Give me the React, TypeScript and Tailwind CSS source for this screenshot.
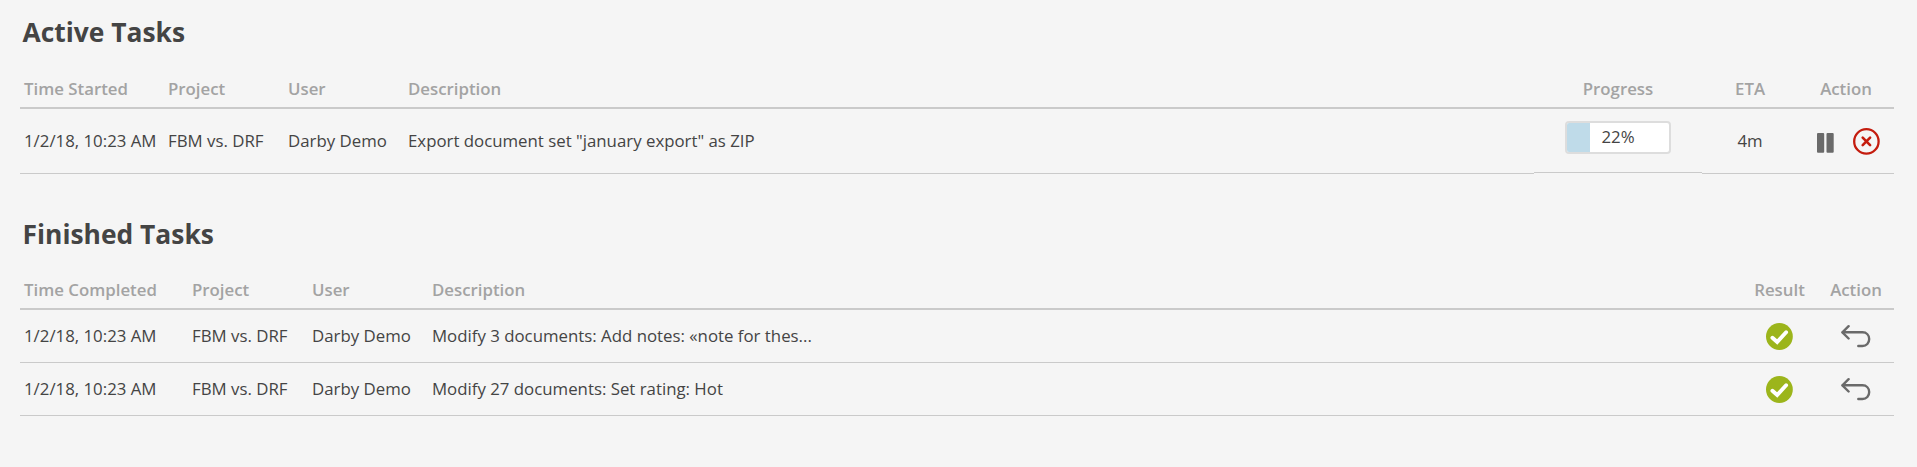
import type { ReactNode } from "react"
import clsx from "clsx"

const activeTasks = [
    { time: '1/2/18, 10:23 AM', project: 'FBM vs. DRF', user: 'Darby Demo', description: 'Export document set "january export" as ZIP', progress: 22, eta: '4m' },
]

const finishedTasks = [
    { time: '1/2/18, 10:23 AM', project: 'FBM vs. DRF', user: 'Darby Demo', description: 'Modify 3 documents: Add notes: «note for thes...' },
    { time: '1/2/18, 10:23 AM', project: 'FBM vs. DRF', user: 'Darby Demo', description: 'Modify 27 documents: Set rating: Hot' },
]

const activeCols = "grid grid-cols-[144px_120px_120px_1fr_168px_96px_96px]"
const finishedCols = "grid grid-cols-[168px_120px_120px_1fr_77px_76px]"

function PauseIcon(){
    return (
        <svg width="17" height="20" viewBox="0 0 17 20" fill="#6a6a6a">
            <rect x="0" y="0" width="7.2" height="19.8" rx="1" />
            <rect x="9.5" y="0" width="7.2" height="19.8" rx="1" />
        </svg>
    )
}

function CancelIcon(){
    return (
        <svg width="28" height="28" viewBox="0 0 28 28" fill="none" stroke="#c41c0e" strokeWidth="2.3">
            <circle cx="14.4" cy="14.4" r="12.2" />
            <path d="M10.7 10.7l7.4 7.4M18.1 10.7l-7.4 7.4" strokeWidth="2.6" strokeLinecap="round" />
        </svg>
    )
}

function CheckIcon(){
    return (
        <svg width="28" height="28" viewBox="0 0 28 28" fill="none">
            <circle cx="14.4" cy="14.5" r="13.4" fill="#9cb51b" />
            <path d="M7.4 15.7l4.8 4.3 8.9-9.8" stroke="#fff" strokeWidth="3.9" strokeLinecap="round" />
        </svg>
    )
}

function UndoIcon(){
    return (
        <svg width="30" height="24" viewBox="0 0 30 24" fill="none" stroke="#6a6a6a" strokeWidth="2.4" strokeLinecap="round" strokeLinejoin="round">
            <path d="M7.6 2.2L1.4 8.3L7.6 14.5" />
            <path d="M1.8 8.3H21.5C25.5 8.3 28.2 11.3 28.2 15.1S25.5 22 21.5 22H17.3" />
        </svg>
    )
}

function HeaderRow({ cols, labels, centerFrom }: { cols: string; labels: string[]; centerFrom: number }){
    return (
        <div className={clsx(cols, "h-[39px] border-b-2 border-[#cacaca] font-semibold text-[#a3a3a3] leading-[38px]")}>
            {labels.map((label, i) => (
                <div key={label} className={clsx("px-1", i >= centerFrom && "text-center")}>{label}</div>
            ))}
        </div>
    )
}

function Cell({ children, className }: { children?: ReactNode; className?: string }){
    return (
        <div className={clsx("flex items-center border-b border-[#cacaca] px-1 whitespace-nowrap", className)}>{children}</div>
    )
}

function ProgressBar({ value }: { value: number }){
    return (
        <div className="relative h-[33px] w-[106px] overflow-hidden rounded border-2 border-[#dddddd] bg-white">
            <div className="h-full bg-[#bfdbe9]" style={{ width: `${Math.ceil(value * 1.02)}px` }} />
            <span className="absolute inset-0 text-center leading-[28px]">{value}%</span>
        </div>
    )
}

export default function App(){
    return (
        <main className="h-[467px] bg-[#f5f5f5] pl-5 pr-[23px] font-['Open_Sans',sans-serif] text-[16.82px] text-[#444444]">
            <h2 className="h-[70px] pl-[2.5px] pt-[14px] text-[26.4px] font-bold leading-[37px]">Active Tasks</h2>
            <HeaderRow cols={activeCols} labels={['Time Started', 'Project', 'User', 'Description', 'Progress', 'ETA', 'Action']} centerFrom={4} />
            {activeTasks.map((task) => (
                <div key={task.description} className={clsx(activeCols, "h-[65px]")}>
                    <Cell>{task.time}</Cell>
                    <Cell>{task.project}</Cell>
                    <Cell>{task.user}</Cell>
                    <Cell>{task.description}</Cell>
                    <Cell className="mb-px items-start justify-center pt-3">
                        <ProgressBar value={task.progress} />
                    </Cell>
                    <Cell className="justify-center">{task.eta}</Cell>
                    <Cell className="items-start pl-[19px] pt-[18px]">
                        <span className="mt-1.5"><PauseIcon /></span>
                        <span className="ml-[18px]"><CancelIcon /></span>
                    </Cell>
                </div>
            ))}

            <h2 className="h-[97px] pl-[2.5px] pt-[42px] text-[26.4px] font-bold leading-[37px]">Finished Tasks</h2>
            <HeaderRow cols={finishedCols} labels={['Time Completed', 'Project', 'User', 'Description', 'Result', 'Action']} centerFrom={4} />
            {finishedTasks.map((task) => (
                <div key={task.description} className={clsx(finishedCols, "h-[53px]")}>
                    <Cell>{task.time}</Cell>
                    <Cell>{task.project}</Cell>
                    <Cell>{task.user}</Cell>
                    <Cell>{task.description}</Cell>
                    <Cell className="justify-center pr-1.5"><CheckIcon /></Cell>
                    <Cell className="justify-center pr-[5px]"><UndoIcon /></Cell>
                </div>
            ))}
        </main>
    )
}
